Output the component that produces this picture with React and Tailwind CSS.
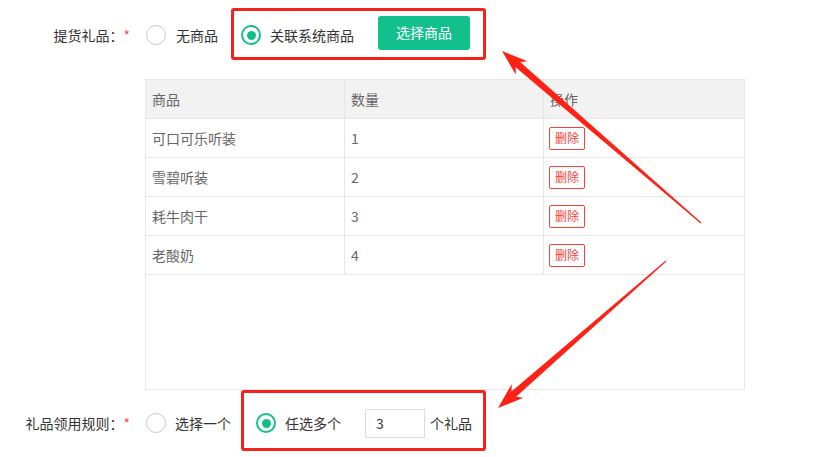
const rows = [
    { name: '可口可乐听装', qty: 1 },
    { name: '雪碧听装', qty: 2 },
    { name: '耗牛肉干', qty: 3 },
    { name: '老酸奶', qty: 4 },
];

function Radio({ checked }) {
    return (
        <span
            className={`w-5 h-5 rounded-full border flex items-center justify-center shrink-0 bg-white ${
                checked ? 'border-[#12bf8b] border-2' : 'border-[#c9c9c9]'
            }`}
        >
            {checked && <span className="w-[9px] h-[9px] rounded-full bg-[#12bf8b]" />}
        </span>
    );
}

function Label({ text }) {
    return (
        <div className="w-[146px] shrink-0 text-right pr-[16px] text-[14px] text-[#333]">
            {text}
            <span className="text-[#ff4d4f]">*</span>
        </div>
    );
}

function Arrow({ points }) {
    return <polygon points={points} fill="#ff2116" />;
}

export default function App() {
    return (
        <div
            className="relative w-full h-[457px] bg-white overflow-hidden"
            style={{ fontFamily: '"Noto Sans CJK SC", "Noto Sans", sans-serif' }}
        >
            <div className="pt-[15px]">
                {/* 提货礼品 */}
                <div className="flex items-center h-[40px]">
                    <Label text="提货礼品：" />
                    <div className="flex items-center gap-[10px]">
                        <Radio />
                        <span className="text-[14px] text-[#333]">无商品</span>
                    </div>
                    <div className="relative flex items-center ml-[23px]">
                        <div className="absolute -left-[10px] -right-[16px] -top-[8px] -bottom-[5px] border-[3px] border-[#f5221b] rounded-[3px]" />
                        <Radio checked />
                        <span className="ml-[9px] text-[14px] text-[#333]">关联系统商品</span>
                        <button className="ml-[24px] mb-[5px] w-[92px] h-[34px] rounded-[3px] bg-[#12c08c] text-white text-[14px]">
                            选择商品
                        </button>
                    </div>
                </div>

                {/* 商品表格 */}
                <div className="ml-[145px] mt-[24px] w-[600px] h-[311px] border border-[#e6e6e6] text-[14px] text-[#666]">
                    <div className="flex h-[39px] bg-[#f2f2f2] border-b border-[#e6e6e6]">
                        <div className="w-[199px] border-r border-[#e6e6e6] pl-[6px] flex items-center">商品</div>
                        <div className="w-[199px] border-r border-[#e6e6e6] pl-[6px] flex items-center">数量</div>
                        <div className="flex-1 pl-[6px] flex items-center">操作</div>
                    </div>
                    {rows.map((row) => (
                        <div key={row.name} className="flex h-[39px] border-b border-[#e6e6e6]">
                            <div className="w-[199px] border-r border-[#e6e6e6] pl-[6px] flex items-center">{row.name}</div>
                            <div className="w-[199px] border-r border-[#e6e6e6] pl-[6px] flex items-center">{row.qty}</div>
                            <div className="flex-1 pl-[5px] flex items-center">
                                <button className="w-[36px] h-[23px] border border-[#f0443a] rounded-[2px] text-[12px] text-[#f0443a] leading-none">
                                    删除
                                </button>
                            </div>
                        </div>
                    ))}
                </div>

                {/* 礼品领用规则 */}
                <div className="flex items-center h-[30px] mt-[18px]">
                    <Label text="礼品领用规则：" />
                    <div className="flex items-center gap-[9px]">
                        <Radio />
                        <span className="text-[14px] text-[#333]">选择一个</span>
                    </div>
                    <div className="relative flex items-center ml-[25px]">
                        <div className="absolute -left-[15px] -right-[14px] -top-[19px] -bottom-[13px] border-[3px] border-[#f5221b] rounded-[3px]" />
                        <Radio checked />
                        <span className="ml-[9px] text-[14px] text-[#333]">任选多个</span>
                        <input
                            className="ml-[24px] w-[60px] h-[29px] border border-[#dcdcdc] pl-[10px] text-[14px] text-[#333] outline-none"
                            defaultValue="3"
                        />
                        <span className="ml-[5px] text-[14px] text-[#333]">个礼品</span>
                    </div>
                </div>
            </div>

            {/* 标注箭头 */}
            <svg className="absolute inset-0 pointer-events-none" width="817" height="457" viewBox="0 0 817 457">
                <Arrow points="502,51 527.6,61.2 520.2,62.1 701.4,222.6 700.6,223.4 515.6,67.3 515.8,74.8" />
                <Arrow points="498,408 511.7,384.1 511.5,391.6 665.7,260.6 666.3,261.4 516.1,396.8 523.5,397.7" />
            </svg>
        </div>
    );
}
